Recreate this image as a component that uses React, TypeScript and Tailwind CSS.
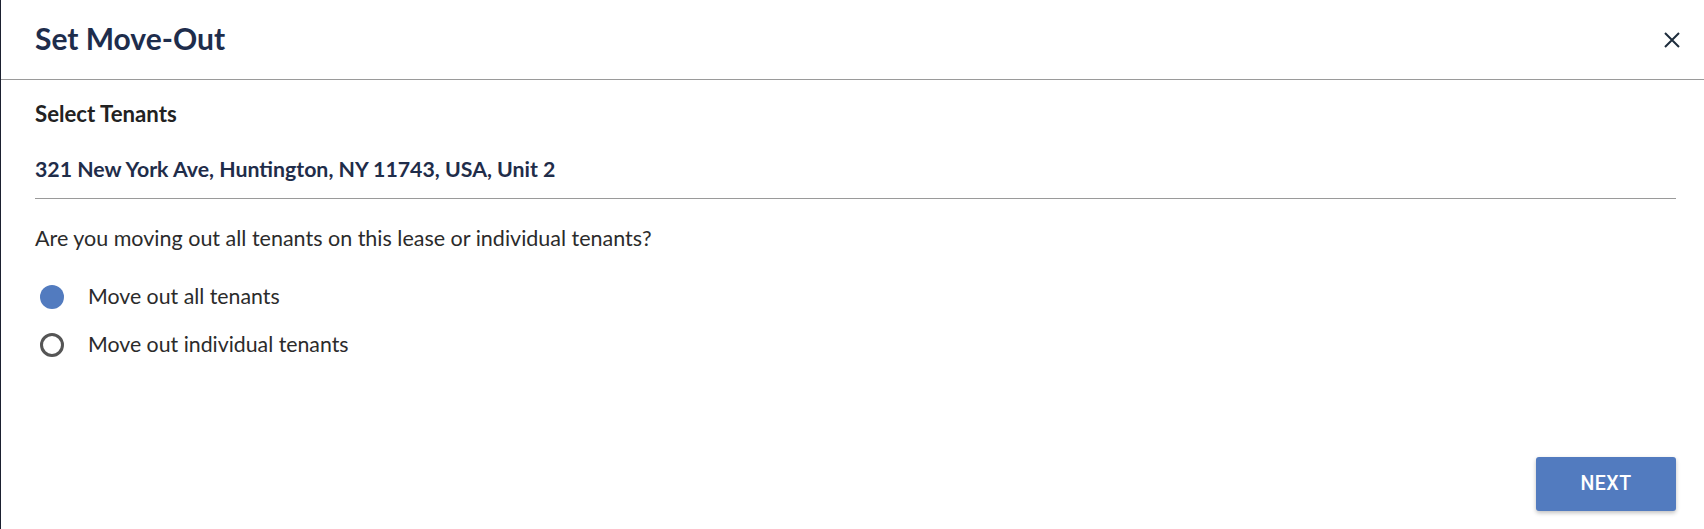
export default function App() {
  return (
    <div className="flex h-[529px] w-full flex-col border-l border-[#1b2030] bg-white font-['Lato',sans-serif]">
      <header className="flex h-[80px] shrink-0 items-start justify-between border-b border-[#9a9a9a] pl-[34px] pr-[24px] pt-[20px]">
        <h1 className="text-[30px] font-bold leading-[36px] text-[#1e2d4c]">Set Move-Out</h1>
        <button className="mt-[12px] text-[#1e2d3d]" aria-label="Close">
          <svg width="16" height="16" viewBox="0 0 16 16" fill="none" stroke="currentColor" strokeWidth="2">
            <path d="M1 1 L15 15 M15 1 L1 15" />
          </svg>
        </button>
      </header>

      <div className="flex flex-1 flex-col pl-[34px] pr-[28px]">
        <h2 className="mt-[22px] text-[22.2px] font-bold leading-[24px] text-[#222]">Select Tenants</h2>
        <div className="mt-[31px] border-b border-[#9a9a9a] pb-[17px] text-[21.3px] font-bold leading-[24px] text-[#1f2d4a]">
          321 New York Ave, Huntington, NY 11743, USA, Unit 2
        </div>

        <p className="mt-[26px] text-[21.5px] leading-[26px] text-[#2b2b2b]">
          Are you moving out all tenants on this lease or individual tenants?
        </p>

        <div className="mt-[22px] flex flex-col">
          <label className="flex h-[48px] items-center">
            <span className="ml-[5px] h-[24px] w-[24px] rounded-full bg-[#527bbf]" />
            <span className="ml-[24px] text-[21.3px] text-[#2b2b2b]">Move out all tenants</span>
          </label>
          <label className="flex h-[48px] items-center">
            <span className="ml-[5px] h-[24px] w-[24px] rounded-full border-[3px] border-[#555]" />
            <span className="ml-[24px] text-[21.3px] text-[#2b2b2b]">Move out individual tenants</span>
          </label>
        </div>

        <div className="mt-[88px] flex justify-end">
          <button className="h-[54px] w-[140px] rounded-[3px] bg-[#527bbf] font-['Roboto',sans-serif] text-[19.5px] font-medium tracking-[0.5px] text-white shadow-[0_2px_4px_rgba(0,0,0,0.25)]">
            NEXT
          </button>
        </div>
      </div>
    </div>
  );
}
